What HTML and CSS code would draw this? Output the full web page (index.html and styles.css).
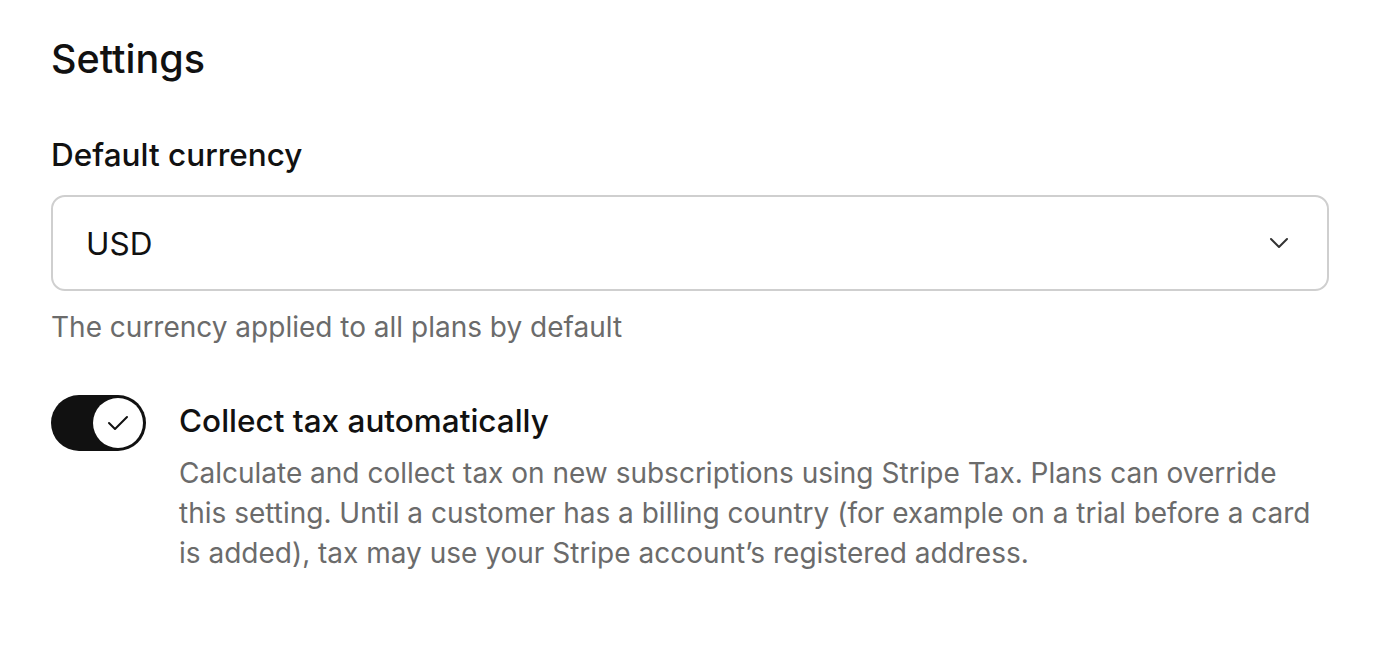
FILE: index.html
```html
<!DOCTYPE html>
<html>
<head>
<meta charset="UTF-8">
<title>Settings</title>
<link rel="stylesheet" href="styles.css">
</head>
<body>
<div class="wrap">
<h1>Settings</h1>
<div class="field">
<label class="label">Default currency</label>
<div class="select">
<span class="value">USD</span>
<svg class="chevron" width="20" height="12" viewBox="0 0 20 12"><path d="M2 2 L10 10 L18 2" fill="none" stroke="#333" stroke-width="2" stroke-linecap="round" stroke-linejoin="round"/></svg>
</div>
<p class="hint">The currency applied to all plans by default</p>
</div>
<div class="option">
<div class="toggle">
<span class="knob">
<svg width="24" height="20" viewBox="0 0 24 20"><path d="M3 10 L9 16 L21 4" fill="none" stroke="#111" stroke-width="2" stroke-linecap="round" stroke-linejoin="round"/></svg>
</span>
</div>
<div class="option-text">
<div class="option-title">Collect tax automatically</div>
<p class="option-desc">Calculate and collect tax on new subscriptions using Stripe Tax. Plans can override this setting. Until a customer has a billing country (for example on a trial before a card is added), tax may use your Stripe account’s registered address.</p>
</div>
</div>
</div>
</body>
</html>
```

FILE: styles.css
```css
body{
margin:0;
background:#fff;
font-family:Inter,"Noto Sans",sans-serif;
color:#111;
}
.wrap{
padding:34px 57px 0 51px;
}
h1{
margin:0;
font-size:39.5px;
font-weight:450;
line-height:50px;
}
.field{
margin-top:51px;
}
.label{
display:block;
font-size:31.5px;
font-weight:450;
line-height:40px;
}
.select{
margin-top:20px;
height:92px;
border:2px solid #cfcfcf;
border-radius:14px;
display:flex;
align-items:center;
justify-content:space-between;
padding:0 38px 0 33px;
}
.value{
font-size:31.5px;
}
.hint{
margin:18px 0 0;
font-size:28px;
line-height:36px;
color:#6b6b6b;
}
.option{
display:flex;
gap:33px;
margin-top:50px;
}
.toggle{
flex:none;
width:95px;
height:56px;
border-radius:28px;
background:#111;
position:relative;
}
.knob{
position:absolute;
right:3px;
top:3px;
width:50px;
height:50px;
border-radius:50%;
background:#fff;
display:flex;
align-items:center;
justify-content:center;
}
.option-title{
font-size:31.5px;
font-weight:450;
line-height:40px;
margin-top:6px;
}
.option-desc{
margin:12px 0 0;
font-size:28px;
line-height:40px;
color:#6b6b6b;
}
```
